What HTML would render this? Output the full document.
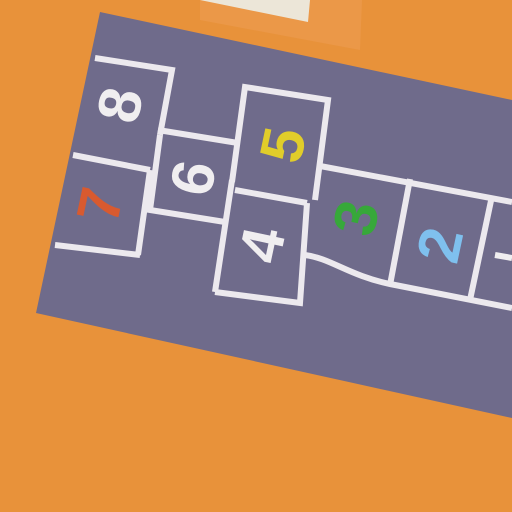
<!DOCTYPE html><html><head><style>body{margin:0;width:512px;height:512px;overflow:hidden;background:#e8913a}</style></head><body>
<svg width="512" height="512" viewBox="0 0 512 512" style="position:absolute;left:0;top:0">
<rect width="512" height="512" fill="#e8923a"/>
<polygon points="200,0 362,0 360,50 200,20" fill="#eb9848"/>
<polygon points="205,0 310,0 308,22 200,0" fill="#ece6d8"/>
<polygon points="100,12 512,100 512,418 36,313" fill="#6f6b8b"/>
<g fill="none" stroke="#ece9ee" stroke-width="6" stroke-linejoin="miter">
<polyline points="95,58 172,70 160,135"/>
<line x1="158" y1="130" x2="238" y2="143"/>
<line x1="73" y1="155" x2="150" y2="170"/>
<polyline points="150,170 138,255"/>
<line x1="55" y1="245" x2="140" y2="255"/>
<polyline points="160,135 150,210 225,222"/>
<polyline points="232,182 245,87 328,100 315,200"/>
<line x1="232" y1="180" x2="215" y2="292"/>
<line x1="235" y1="190" x2="307" y2="203"/>
<polyline points="215,292 300,303 307,203"/>
<line x1="320" y1="166" x2="512" y2="202"/>
<path d="M305,255 C330,258 350,276 390,284 L512,308"/>
<line x1="410" y1="179" x2="390" y2="285"/>
<line x1="492" y1="196" x2="470" y2="300"/>
</g>
<g font-family="Liberation Sans,sans-serif" font-weight="bold" font-size="60" text-anchor="middle" dominant-baseline="central">
<text transform="translate(120,105) rotate(-78)" fill="#f0eef0">8</text>
<text transform="translate(100,205) rotate(-78)" fill="#d85a2f">7</text>
<text transform="translate(193,178) rotate(-78)" fill="#f0eef0">6</text>
<text transform="translate(283,145) rotate(-78)" fill="#e1cd2a">5</text>
<text transform="translate(262,245) rotate(-78)" fill="#f0eef0">4</text>
<text transform="translate(356,218) rotate(-78)" fill="#37a83a">3</text>
<text transform="translate(440,245) rotate(-78)" fill="#7fc0ee">2</text>
</g>
<line x1="495" y1="255" x2="512" y2="258" stroke="#f0eef0" stroke-width="6"/>
</svg></body></html>
